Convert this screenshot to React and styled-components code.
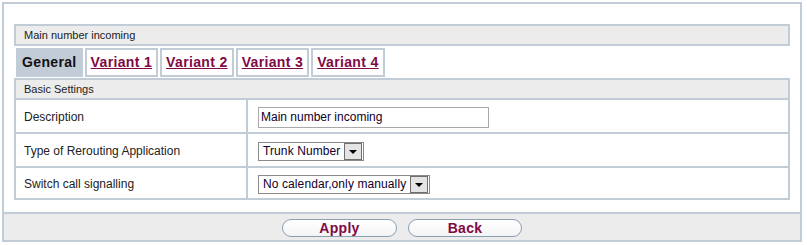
import React from "react";
import styled, { createGlobalStyle } from "styled-components";

const GlobalStyle = createGlobalStyle`
  html, body { margin: 0; padding: 0; background: #fff; }
  body { font-family: "Liberation Sans", Arial, sans-serif; }
  * { box-sizing: border-box; }
`;

const LINE = "#c1ccd7";
const SHADE = "#ececec";
const LINK = "#7f0a46";

const Page = styled.div`
  padding: 2px;
`;

const Frame = styled.div`
  width: 800px;
  height: 240px;
  border: 2px solid ${LINE};
  display: flex;
  flex-direction: column;
`;

const Content = styled.div`
  padding: 20px 10px 12px 10px;
`;

const SectionHeader = styled.div`
  height: 22px;
  border: 2px solid ${LINE};
  background: ${SHADE};
  font-size: 11px;
  line-height: 18px;
  padding-left: 8px;
  color: #222;
`;

const TabRow = styled.div`
  display: flex;
  gap: 2px;
  padding: 2px 2px 1px 2px;
`;

const Tab = styled.div`
  height: 29px;
  border: 2px solid ${LINE};
  background: ${(p) => (p.$active ? LINE : "#fff")};
  padding: 0 4px 0 4px;
  font-size: 14px;
  font-weight: bold;
  letter-spacing: 0.35px;
  line-height: 25px;
  color: ${(p) => (p.$active ? "#111" : LINK)};
  text-decoration: ${(p) => (p.$active ? "none" : "underline")};
  white-space: nowrap;
`;

const Table = styled.div`
  border: 2px solid ${LINE};
  border-top: none;
  display: grid;
  grid-template-columns: 230px 2px 1fr;
`;

const Cell = styled.div`
  height: ${(p) => p.$h}px;
  display: flex;
  align-items: center;
  font-size: 12px;
  color: #222;
  padding-left: ${(p) => (p.$value ? 10 : 8)}px;
  padding-top: 2px;
`;

const VLine = styled.div`
  background: ${LINE};
`;

const HLine = styled.div`
  grid-column: 1 / -1;
  height: 2px;
  background: ${LINE};
`;

const TextInput = styled.div`
  width: 231px;
  height: 21px;
  border: 1px solid #a9a9a9;
  font-size: 12px;
  line-height: 19px;
  padding-left: 2px;
  color: #10002a;
  background: #fff;
`;

const Select = styled.div`
  display: inline-flex;
  align-items: center;
  height: 19px;
  border: 1px solid #8a8a8a;
  background: #fff;
  font-size: 12px;
  letter-spacing: 0.1px;
  color: #10002a;
  padding: 0 1px 0 4px;
  gap: 4px;
`;

const SelectButton = styled.div`
  width: 18px;
  height: 17px;
  border: 1px solid #6f6f6f;
  background: #e4e4e4;
  display: flex;
  align-items: center;
  justify-content: center;
`;

const Arrow = styled.span`
  width: 0;
  height: 0;
  border-left: 4px solid transparent;
  border-right: 4px solid transparent;
  border-top: 4px solid #000;
  margin-top: 1px;
`;

const ButtonBar = styled.div`
  flex: 1;
  border-top: 2px solid ${LINE};
  background: ${SHADE};
  display: flex;
  justify-content: center;
  gap: 11px;
  padding-top: 5px;
`;

const PillButton = styled.div`
  width: ${(p) => p.$w}px;
  height: 18px;
  border: 1px solid #8b9fb4;
  border-radius: 9px;
  background: linear-gradient(#ffffff, #f4f4f4);
  font-size: 14px;
  font-weight: bold;
  letter-spacing: 0.3px;
  line-height: 16px;
  text-align: center;
  color: ${LINK};
`;

const rows = [
  { label: "Description", h: 32, value: <TextInput>Main number incoming</TextInput> },
  {
    label: "Type of Rerouting Application",
    h: 32,
    value: (
      <Select>
        Trunk Number
        <SelectButton>
          <Arrow />
        </SelectButton>
      </Select>
    ),
  },
  {
    label: "Switch call signalling",
    h: 30,
    value: (
      <Select>
        No calendar,only manually
        <SelectButton>
          <Arrow />
        </SelectButton>
      </Select>
    ),
  },
];

export default function App() {
  return (
    <>
      <GlobalStyle />
      <Page>
        <Frame>
          <Content>
            <SectionHeader>Main number incoming</SectionHeader>
            <TabRow>
              <Tab $active>General</Tab>
              <Tab>Variant 1</Tab>
              <Tab>Variant 2</Tab>
              <Tab>Variant 3</Tab>
              <Tab>Variant 4</Tab>
            </TabRow>
            <SectionHeader>Basic Settings</SectionHeader>
            <Table>
              {rows.map((r, i) => (
                <React.Fragment key={r.label}>
                  <Cell $h={r.h}>{r.label}</Cell>
                  <VLine />
                  <Cell $h={r.h} $value>
                    {r.value}
                  </Cell>
                  {i < rows.length - 1 && <HLine />}
                </React.Fragment>
              ))}
            </Table>
          </Content>
          <ButtonBar>
            <PillButton $w={115}>Apply</PillButton>
            <PillButton $w={114}>Back</PillButton>
          </ButtonBar>
        </Frame>
      </Page>
    </>
  );
}
